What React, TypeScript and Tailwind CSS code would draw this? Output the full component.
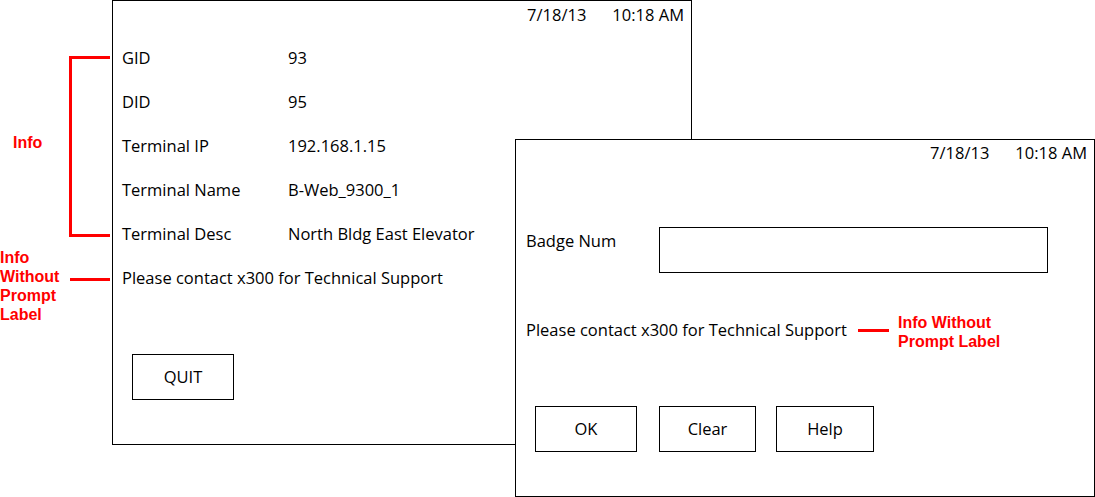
import React from "react";

const font = { fontFamily: '"Open Sans", "Liberation Sans", sans-serif' };
const red = { fontFamily: '"Liberation Sans", Arial, sans-serif' };

function Row({ label, value }: { label: string; value?: string }) {
  return (
    <div className="flex h-[44px] items-center whitespace-nowrap pl-[9px]">
      <div className={value ? "w-[166px] shrink-0" : ""}>{label}</div>
      {value && <div>{value}</div>}
    </div>
  );
}

function DateLine({ h }: { h: string }) {
  return (
    <div className={`flex ${h} items-center justify-end gap-[26px] pr-[7px]`}>
      <span>7/18/13</span>
      <span>10:18 AM</span>
    </div>
  );
}

function Btn({ w, children }: { w: string; children: React.ReactNode }) {
  return (
    <div className={`${w} flex h-[46px] items-center justify-center border border-black pb-[1px]`}>{children}</div>
  );
}

export default function App() {
  return (
    <div className="relative h-[497px] w-[1095px] overflow-hidden bg-white text-[16.5px] leading-[20px] text-black" style={font}>
      {/* Left window */}
      <div className="absolute left-[112px] top-0 flex h-[445px] w-[580px] flex-col border border-black bg-white">
        <DateLine h="h-[28px]" />
        <div className="mt-[7px] flex flex-col">
          <Row label="GID" value="93" />
          <Row label="DID" value="95" />
          <Row label="Terminal IP" value="192.168.1.15" />
          <Row label="Terminal Name" value="B-Web_9300_1" />
          <Row label="Terminal Desc" value="North Bldg East Elevator" />
          <Row label="Please contact x300 for Technical Support" />
        </div>
        <div className="ml-[19px] mt-[54px]">
          <Btn w="w-[102px]">QUIT</Btn>
        </div>
      </div>

      {/* Right window */}
      <div className="absolute left-[515px] top-[139px] flex h-[358px] w-[580px] flex-col border border-black bg-white">
        <DateLine h="h-[26px]" />
        <div className="mt-[61px] flex pl-[10px]">
          <div className="w-[133px] shrink-0 pt-[4px]">Badge Num</div>
          <div className="h-[46px] w-[389px] border border-black" />
        </div>
        <div className="mt-[47px] whitespace-nowrap pl-[10px]">Please contact x300 for Technical Support</div>
        <div className="ml-[19px] mt-[66px] flex">
          <Btn w="w-[102px]">OK</Btn>
          <div className="ml-[22px]">
            <Btn w="w-[97px]">Clear</Btn>
          </div>
          <div className="ml-[20px]">
            <Btn w="w-[98px]">Help</Btn>
          </div>
        </div>
      </div>

      {/* Annotations */}
      <div className="absolute left-[69px] top-[56px] h-[181px] w-[3px] bg-[#ff0000]" />
      <div className="absolute left-[69px] top-[56px] h-[3px] w-[41px] bg-[#ff0000]" />
      <div className="absolute left-[69px] top-[234px] h-[3px] w-[41px] bg-[#ff0000]" />
      <div className="absolute left-[70px] top-[278px] h-[3px] w-[40px] bg-[#ff0000]" />
      <div className="absolute left-[13px] top-[133px] text-[16px] font-bold leading-[19px] text-[#ff0000]" style={red}>
        Info
      </div>
      <div className="absolute left-0 top-[248px] text-[16px] font-bold leading-[19px] text-[#ff0000]" style={red}>
        Info
        <br />
        Without
        <br />
        Prompt
        <br />
        Label
      </div>
      <div className="absolute left-[858px] top-[329px] h-[3px] w-[31px] bg-[#ff0000]" />
      <div className="absolute left-[898px] top-[313px] whitespace-nowrap text-[16px] font-bold leading-[19px] text-[#ff0000]" style={red}>
        Info Without
        <br />
        Prompt Label
      </div>
    </div>
  );
}
